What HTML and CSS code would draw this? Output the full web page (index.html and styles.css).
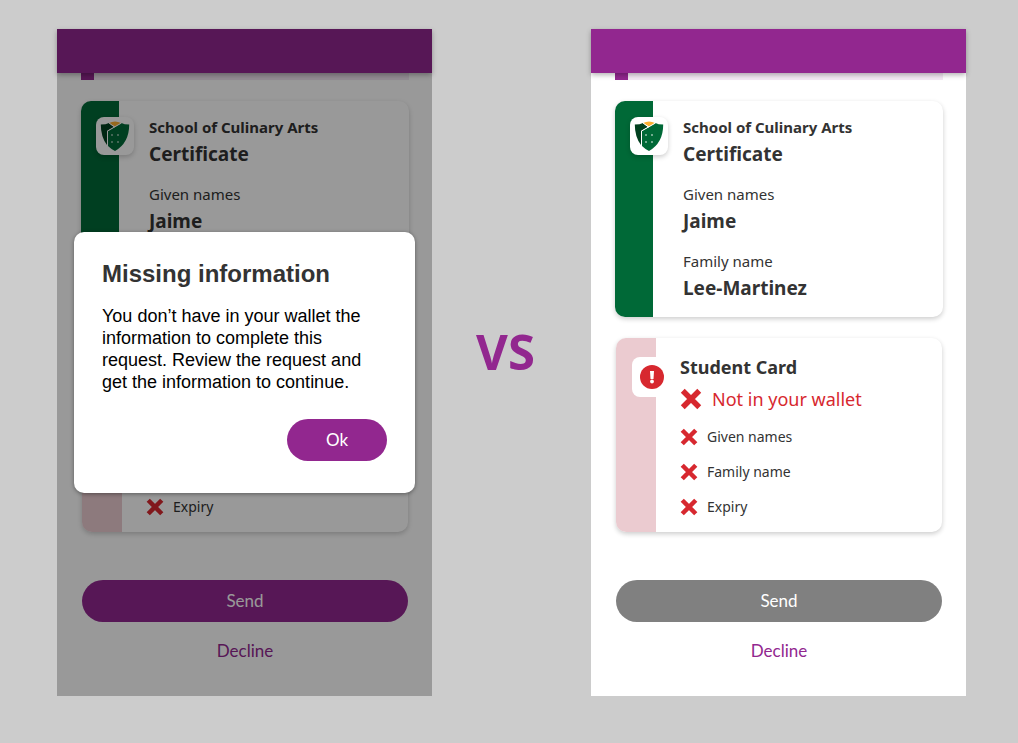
FILE: index.html
```html
<!DOCTYPE html>
<html lang="en">
<head>
<meta charset="utf-8">
<meta name="viewport" content="width=device-width, initial-scale=1">
<title>Missing information: dialog or inline</title>
<link rel="stylesheet" href="styles.css">
</head>
<body>
<svg class="sprite" aria-hidden="true">
  <symbol id="cross" viewBox="0 0 20 20">
    <path d="M2.500 2.500 17.500 17.500M17.500 2.500 2.500 17.500" fill="none" stroke="currentColor" stroke-width="5"/>
  </symbol>
  <symbol id="shield" viewBox="0 0 30 30">
    <path d="M9 2Q15-1 21 2L15 5.500Z" fill="#fbb034"/>
    <path d="M.8 3.500Q6 3.500 9 2L14 6L7 10V24Q.8 16 .8 3.500Z" fill="#00401f"/>
    <path d="M29.200 3.500Q24 3.500 21.500 2L8 10V25Q11 28 15 30Q29.200 22 29.200 3.500Z" fill="#006937"/>
    <path d="M21.500 2 7.500 10V25M9 2 14.500 6" fill="none" stroke="#fff" stroke-width="1"/>
    <g fill="#fff"><circle cx="12" cy="14" r=".8"/><circle cx="18" cy="14" r=".8"/><circle cx="12" cy="21" r=".8"/><circle cx="18" cy="21" r=".8"/></g>
  </symbol>
  <symbol id="alert" viewBox="0 0 24 24">
    <circle cx="12" cy="12" r="12" fill="#d7282f"/>
    <path d="M10 6H14L13.500 14H10.500Z" fill="#fff"/>
    <circle cx="12" cy="16.500" r="1.900" fill="#fff"/>
  </symbol>
</svg>
<main class="compare">
  <section class="phone">
    <header class="topbar"></header>
    <div class="content">
      <div class="progress"><div class="progress-fill"></div></div>
      <article class="card certificate">
        <div class="stripe"><span class="tile"><svg class="logo"><use href="#shield"/></svg></span></div>
        <dl class="fields">
          <div><dt class="issuer">School of Culinary Arts</dt><dd>Certificate</dd></div>
          <div><dt>Given names</dt><dd>Jaime</dd></div>
          <div class="covered"><dt>Family name</dt><dd>Lee-Martinez</dd></div>
        </dl>
      </article>
      <article class="card student">
        <div class="stripe"><span class="tile covered"><svg class="alert"><use href="#alert"/></svg></span></div>
        <div class="details">
          <h2 class="covered">Student Card</h2>
          <p class="status covered"><svg class="cross-large"><use href="#cross"/></svg>Not in your wallet</p>
          <ul class="missing">
            <li class="covered"><svg class="cross"><use href="#cross"/></svg>Given names</li>
            <li class="covered"><svg class="cross"><use href="#cross"/></svg>Family name</li>
            <li><svg class="cross"><use href="#cross"/></svg>Expiry</li>
          </ul>
        </div>
      </article>
      <div class="actions">
        <button class="button send" type="button">Send</button>
        <button class="decline" type="button">Decline</button>
      </div>
    </div>
    <div class="overlay">
      <div class="dialog" role="dialog" aria-labelledby="dialog-title">
        <h1 id="dialog-title">Missing information</h1>
        <p>You don’t have in your wallet the information to complete this request. Review the request and get the information to continue.</p>
        <button class="button ok" type="button">Ok</button>
      </div>
    </div>
  </section>
  <div class="versus">VS</div>
  <section class="phone">
    <header class="topbar"></header>
    <div class="content">
      <div class="progress"><div class="progress-fill"></div></div>
      <article class="card certificate">
        <div class="stripe"><span class="tile"><svg class="logo"><use href="#shield"/></svg></span></div>
        <dl class="fields">
          <div><dt class="issuer">School of Culinary Arts</dt><dd>Certificate</dd></div>
          <div><dt>Given names</dt><dd>Jaime</dd></div>
          <div><dt>Family name</dt><dd>Lee-Martinez</dd></div>
        </dl>
      </article>
      <article class="card student">
        <div class="stripe"><span class="tile"><svg class="alert"><use href="#alert"/></svg></span></div>
        <div class="details">
          <h2>Student Card</h2>
          <p class="status"><svg class="cross-large"><use href="#cross"/></svg>Not in your wallet</p>
          <ul class="missing">
            <li><svg class="cross"><use href="#cross"/></svg>Given names</li>
            <li><svg class="cross"><use href="#cross"/></svg>Family name</li>
            <li><svg class="cross"><use href="#cross"/></svg>Expiry</li>
          </ul>
        </div>
      </article>
      <div class="actions">
        <button class="button send" type="button" disabled>Send</button>
        <button class="decline" type="button">Decline</button>
      </div>
    </div>
  </section>
</main>
</body>
</html>
```
FILE: styles.css
```css
:root {
  --purple: #92278f;
  --red: #d7282f;
  --ink: #333;
}

* { box-sizing: border-box; }

body, h1, h2, p, ul, dl, dd { margin: 0; }

body {
  background: #ccc;
  color: var(--ink);
  font-family: "Noto Sans", sans-serif;
}

button { border: 0; font: inherit; cursor: pointer; }

.sprite { position: absolute; width: 0; height: 0; }

.compare {
  display: grid;
  grid-template-columns: 375fr 159fr 375fr;
  padding: 29px 52px 47px 57px;
}

.phone { position: relative; background: #fff; }

.topbar {
  position: relative;
  z-index: 1;
  height: 44px;
  background: var(--purple);
  box-shadow: 0 2px 5px rgba(0, 0, 0, .3);
}

.content { padding: 0 23px 30px 24px; }

.progress { height: 7px; margin-bottom: 21px; background: #f4e9f4; }
.progress-fill { width: 4%; height: 100%; background: var(--purple); }

.card {
  display: flex;
  border-radius: 10px;
  background: #fff;
  box-shadow: 0 2px 5px rgba(0, 0, 0, .2);
}

.stripe {
  flex: none;
  border-radius: 10px 0 0 10px;
}

.tile {
  display: grid;
  place-items: center;
  border-radius: 8px;
  background: #fff;
}

.certificate { margin-bottom: 21px; }
.certificate .stripe { width: 38px; padding: 16px 0 0 15px; background: #006937; }
.certificate .tile { width: 38px; height: 38px; box-shadow: 0 2px 5px rgba(0, 0, 0, .2); }
.logo { width: 30px; height: 30px; }

.fields { display: grid; gap: 13px; padding: 14px 0 14px 30px; }
.fields dt { font-size: 15px; line-height: 25px; }
.fields .issuer { font-weight: 700; }
.fields dd { font-size: 19px; font-weight: 700; line-height: 29px; }

.student { margin: 0 1px; }
.student .stripe { width: 40px; padding: 19px 0 0 16px; background: #ebcbd0; }
.student .tile { width: 40px; height: 40px; }
.alert { width: 24px; height: 24px; }

.details { padding: 14px 0 8px 24px; }
.details h2 { font-size: 18px; line-height: 31px; }

.status {
  display: flex;
  align-items: center;
  gap: 10px;
  color: var(--red);
  font-size: 18px;
  line-height: 32px;
}

.missing { padding: 4px 0 0; list-style: none; }

.missing li {
  display: flex;
  align-items: center;
  gap: 9px;
  font-size: 14px;
  line-height: 35px;
}

.cross { width: 18px; height: 18px; color: var(--red); }
.cross-large { width: 22px; height: 22px; }

/* Rows that lie wholly behind the open dialog. */
.covered { visibility: hidden; }

.actions { display: grid; gap: 14px; margin: 48px 1px 0; }

.button {
  border-radius: 21px;
  background: var(--purple);
  color: #fff;
  font-family: Lato, "Noto Sans", sans-serif;
  font-size: 17px;
  line-height: 42px;
}

.button:disabled { background: #808080; cursor: default; }
.send { padding: 0; }

.decline {
  justify-self: center;
  padding: 0 12px;
  background: none;
  color: var(--purple);
  font-family: Lato, "Noto Sans", sans-serif;
  font-size: 17px;
  line-height: 30px;
}

.overlay {
  position: absolute;
  inset: 0;
  z-index: 2;
  display: flex;
  align-items: center;
  padding: 0 17px;
  background: rgba(0, 0, 0, .4);
}

.dialog {
  display: flex;
  flex-direction: column;
  flex: 1;
  padding: 25px 28px 32px;
  border-radius: 10px;
  background: #fff;
  box-shadow: 0 1px 4px rgba(0, 0, 0, .4);
  color: #000;
  font-family: "Liberation Sans", Arial, sans-serif;
}

.dialog h1 { margin-bottom: 14px; color: var(--ink); font-size: 24px; line-height: 34px; }
.dialog p { margin-bottom: 26px; font-size: 18px; line-height: 22px; }
.ok { align-self: flex-end; width: 100px; padding: 0; }

.versus {
  align-self: center;
  color: var(--purple);
  font-size: 49px;
  font-weight: 700;
  line-height: 60px;
  text-align: center;
  padding: 0 12px 24px 0;
}
```
